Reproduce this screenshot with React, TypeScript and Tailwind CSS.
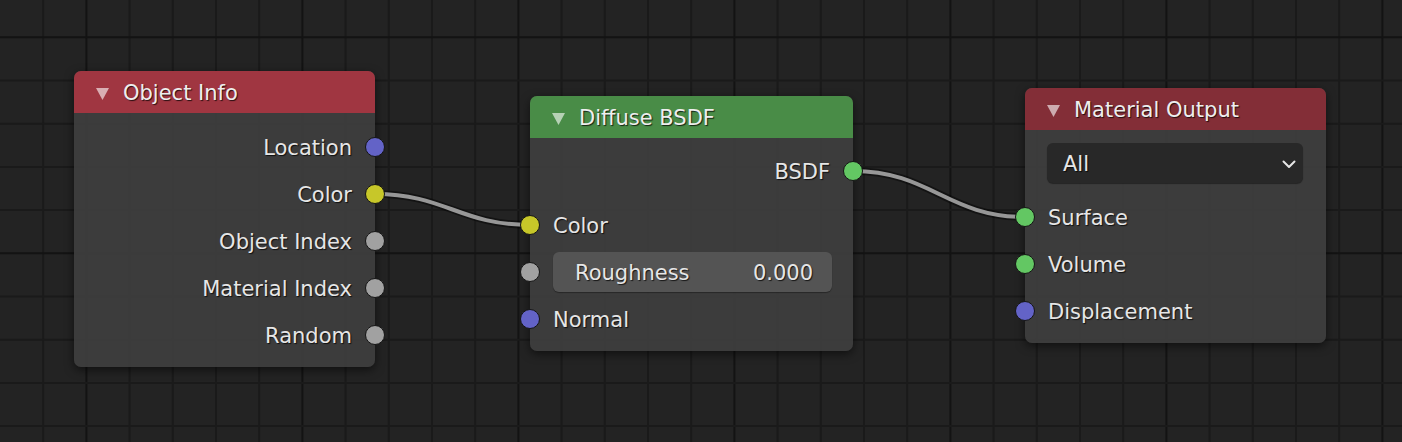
import React from "react";

const FONT = "font-['DejaVu_Sans',sans-serif]";
const TEXT = "text-[21px] text-[#e6e6e6] [text-shadow:1px_1px_1px_rgba(0,0,0,0.75)] translate-y-[2px]";

type SocketColor = "blue" | "yellow" | "gray" | "green";
const socketCls: Record<SocketColor, string> = {
  blue: "bg-[#6363c7]",
  yellow: "bg-[#c7c729]",
  gray: "bg-[#a1a1a1]",
  green: "bg-[#63c763]",
};

function Socket({ color, side }: { color: SocketColor; side: "left" | "right" }) {
  return (
    <span
      className={`absolute top-1/2 -translate-y-1/2 w-[20px] h-[20px] rounded-full border border-[#151515] ${socketCls[color]} ${
        side === "right" ? "right-[-10px]" : "left-[-10px]"
      }`}
    />
  );
}

function OutRow({ label, color }: { label: string; color: SocketColor }) {
  return (
    <div className="relative h-[47px] flex items-center justify-end pr-[23px]">
      <span className={TEXT}>{label}</span>
      <Socket color={color} side="right" />
    </div>
  );
}

function InRow({ label, color }: { label: string; color: SocketColor }) {
  return (
    <div className="relative h-[47px] flex items-center pl-[23px]">
      <span className={TEXT}>{label}</span>
      <Socket color={color} side="left" />
    </div>
  );
}

function Header({ title, color }: { title: string; color: string }) {
  return (
    <div className={`h-[42px] rounded-t-[7px] flex items-center pl-[22px] ${color}`}>
      <svg width="13" height="12" viewBox="0 0 13 12" className="opacity-60 translate-y-[2px]">
        <path d="M0 0 L13 0 L6.5 12 Z" fill="#ffffff" />
      </svg>
      <span className={`ml-[14px] ${TEXT} text-[#eeeeee]`}>{title}</span>
    </div>
  );
}

const nodeBase =
  "absolute rounded-[7px] bg-[rgba(62,62,62,0.94)] shadow-[0_3px_10px_rgba(0,0,0,0.55)]";

function Grid() {
  const w = 1402;
  const h = 442;
  const step = 43.2;
  const lines: React.ReactElement[] = [];
  for (let n = 1; n * step < w + 2; n++) {
    const x = n * step;
    const major = (n - 2) % 5 === 0;
    lines.push(
      <line key={"v" + n} x1={x} y1={0} x2={x} y2={h} stroke={major ? "#131313" : "#1a1a1a"} strokeWidth={2} />
    );
  }
  for (let k = 0; 37.3 + k * step < h + 2; k++) {
    const y = 37.3 + k * step;
    const major = k % 5 === 0;
    lines.push(
      <line key={"h" + k} x1={0} y1={y} x2={w} y2={y} stroke={major ? "#131313" : "#1a1a1a"} strokeWidth={2} />
    );
  }
  return (
    <svg className="absolute inset-0" width={w} height={h}>
      <rect width={w} height={h} fill="#232323" />
      {lines}
    </svg>
  );
}

function Links() {
  const p1 = "M375 194 C 445 194, 460 225, 530 225";
  const p2 = "M853 171 C 930 171, 948 217, 1025 217";
  return (
    <svg className="absolute inset-0" width={1402} height={442}>
      {[p1, p2].map((d, i) => (
        <g key={i}>
          <path d={d} fill="none" stroke="rgba(0,0,0,0.45)" strokeWidth={7.5} />
          <path d={d} fill="none" stroke="#979797" strokeWidth={4} />
        </g>
      ))}
    </svg>
  );
}

export default function App() {
  return (
    <div className={`relative w-[1402px] h-[442px] overflow-hidden bg-[#232323] ${FONT}`}>
      <Grid />
      <Links />

      {/* Object Info */}
      <div className={`${nodeBase} left-[74px] top-[71px] w-[301px]`}>
        <Header title="Object Info" color="bg-[#a03641]" />
        <div className="pt-[10.5px] pb-[8.5px]">
          <OutRow label="Location" color="blue" />
          <OutRow label="Color" color="yellow" />
          <OutRow label="Object Index" color="gray" />
          <OutRow label="Material Index" color="gray" />
          <OutRow label="Random" color="gray" />
        </div>
      </div>

      {/* Diffuse BSDF */}
      <div className={`${nodeBase} left-[530px] top-[96px] w-[323px]`}>
        <Header title="Diffuse BSDF" color="bg-[#498c47]" />
        <div className="pt-[9.5px] pb-[8.5px]">
          <OutRow label="BSDF" color="green" />
          <div className="h-[7px]" />
          <InRow label="Color" color="yellow" />
          <div className="relative h-[47px] flex items-center">
            <Socket color="gray" side="left" />
            <div className="ml-[23px] mr-[21px] flex-1 h-[40px] rounded-[6px] bg-[#545454] shadow-[0_1px_1px_rgba(0,0,0,0.35)] flex items-center justify-between pl-[22px] pr-[19px]">
              <span className={TEXT}>Roughness</span>
              <span className={TEXT}>0.000</span>
            </div>
          </div>
          <InRow label="Normal" color="blue" />
        </div>
      </div>

      {/* Material Output */}
      <div className={`${nodeBase} left-[1025px] top-[88px] w-[301px]`}>
        <Header title="Material Output" color="bg-[#832e37]" />
        <div className="pt-[13px] pb-[8.5px]">
          <div className="ml-[22px] mr-[23px] h-[40px] rounded-[6px] bg-[#282828] shadow-[0_1px_1px_rgba(0,0,0,0.4)] flex items-center justify-between pl-[16px] pr-[7px]">
            <span className={TEXT}>All</span>
            <svg width="14" height="9" viewBox="0 0 14 9" className="translate-y-[1px]">
              <path d="M1.5 1.5 L7 7 L12.5 1.5" fill="none" stroke="#e6e6e6" strokeWidth="2" strokeLinecap="round" strokeLinejoin="round" />
            </svg>
          </div>
          <div className="h-[10.5px]" />
          <InRow label="Surface" color="green" />
          <InRow label="Volume" color="green" />
          <InRow label="Displacement" color="blue" />
        </div>
      </div>
    </div>
  );
}
